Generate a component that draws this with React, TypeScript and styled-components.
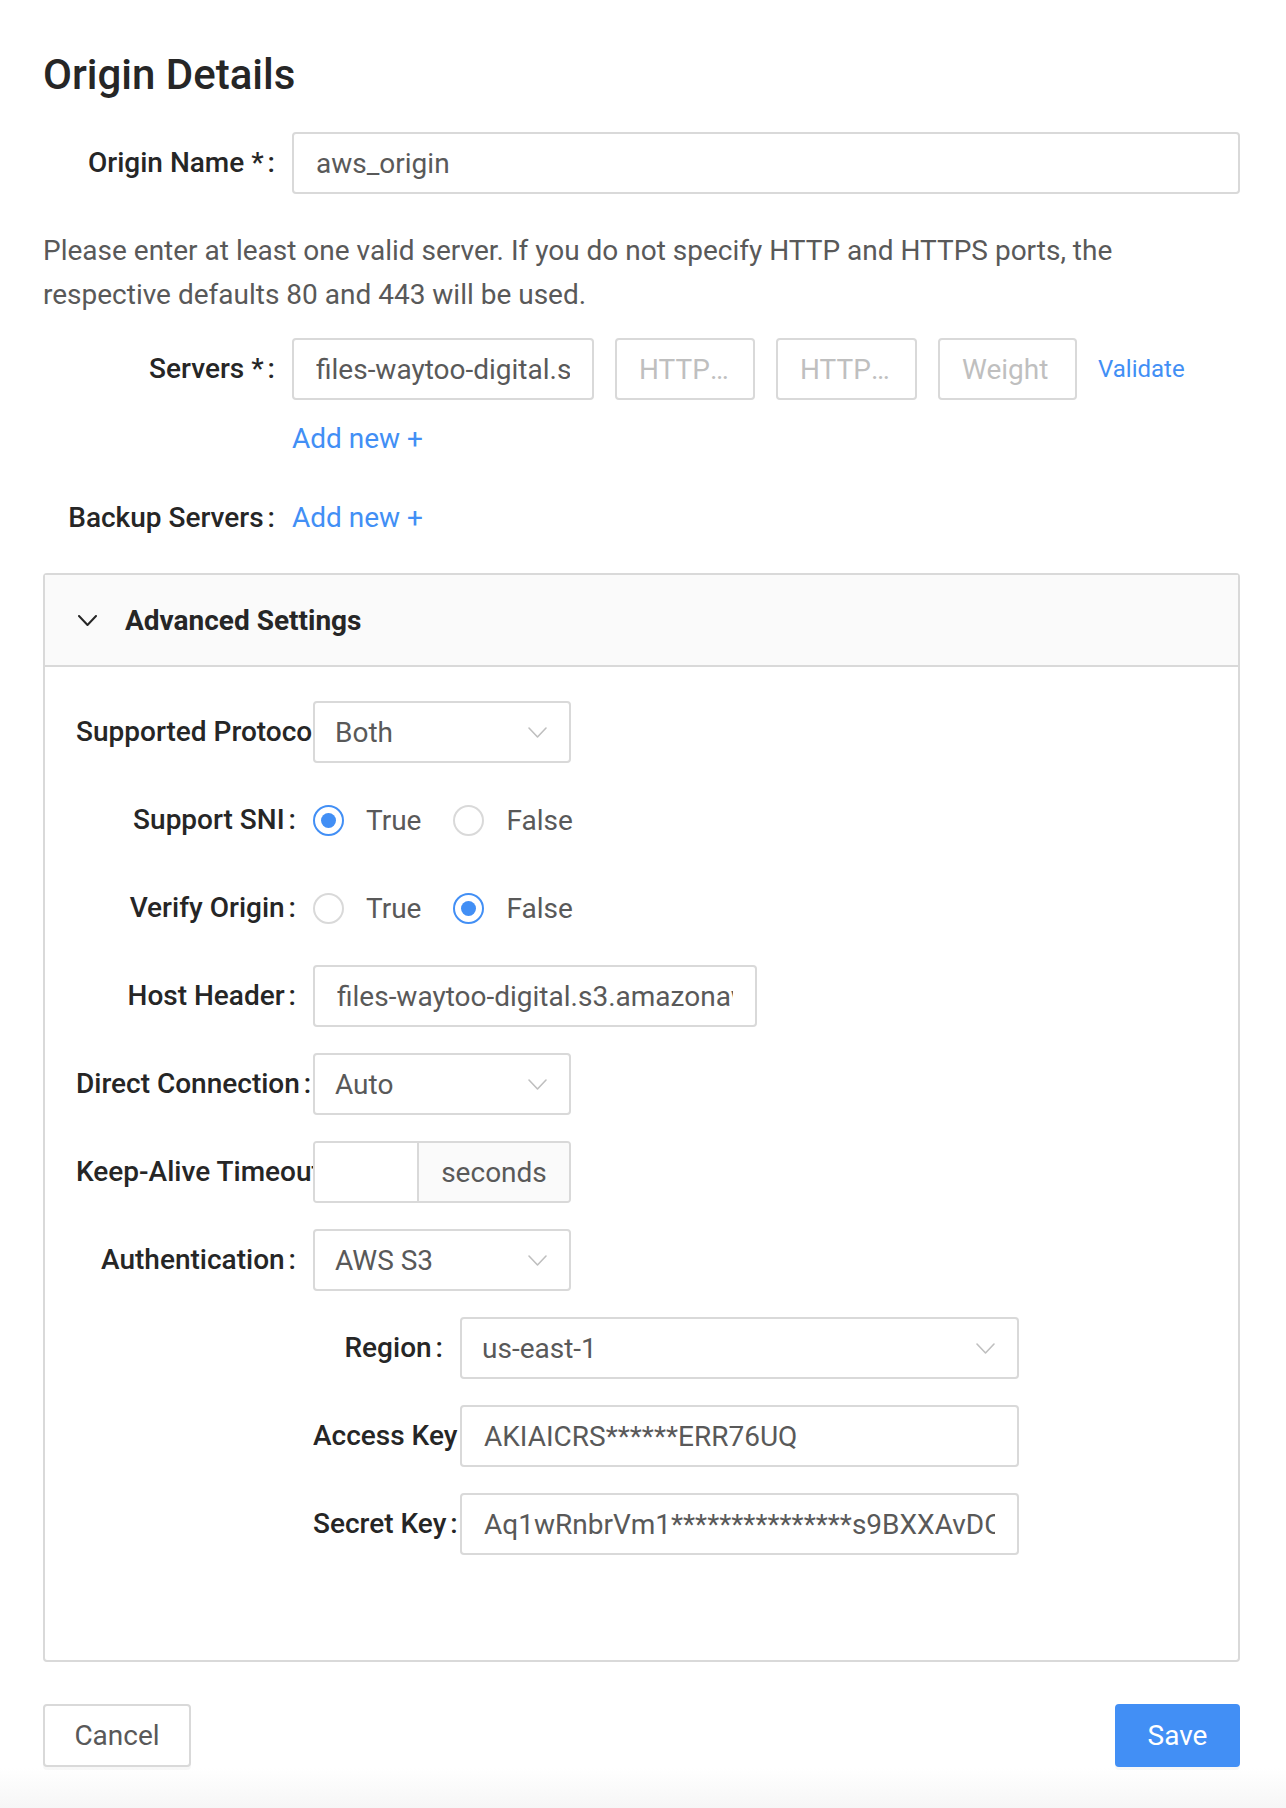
import React from 'react';
import styled, { createGlobalStyle } from 'styled-components';

const BLUE = '#428ff5';
const BORDER = '#d9d9d9';
const FS = 28;

const GlobalStyle = createGlobalStyle`
  html, body { margin: 0; padding: 0; background: #fff; }
  body {
    font-family: Roboto, "Liberation Sans", Arial, sans-serif;
    color: #262626;
    -webkit-font-smoothing: antialiased;
  }
  *, *::before, *::after { box-sizing: border-box; }
`;

const Page = styled.div`
  min-height: 1808px;
  padding: 51px 46px 0 43px;
  background: linear-gradient(to bottom, #fff 0, #fff 1768px, #f6f6f6 1808px);
`;

const Title = styled.h1`
  margin: 0 0 33px;
  font-size: 42px;
  line-height: 48px;
  font-weight: 500;
  color: #262626;
`;

const Row = styled.div<{ $mb?: number; $mt?: number }>`
  display: flex;
  align-items: center;
  min-height: 62px;
  margin-top: ${(p) => p.$mt ?? 0}px;
  margin-bottom: ${(p) => p.$mb ?? 0}px;
`;

const Label = styled.label<{ $width: number }>`
  flex: 0 0 ${(p) => p.$width}px;
  width: ${(p) => p.$width}px;
  overflow: hidden;
  white-space: nowrap;
  text-align: right;
  font-size: ${FS}px;
  line-height: 40px;
  font-weight: 500;
  color: #262626;
  &::after {
    content: ':';
    margin: 0 17px 0 4px;
  }
`;

const Controls = styled.div<{ $gap?: number }>`
  display: flex;
  align-items: center;
  gap: ${(p) => p.$gap ?? 0}px;
  flex: 1;
  min-width: 0;
`;

const TextInput = styled.input<{ $width?: number; $ellipsis?: boolean }>`
  height: 62px;
  width: ${(p) => (p.$width ? `${p.$width}px` : '100%')};
  flex: ${(p) => (p.$width ? `0 0 ${p.$width}px` : '1')};
  border: 2px solid ${BORDER};
  border-radius: 4px;
  padding: 0 22px;
  font-family: Roboto, "Liberation Sans", Arial, sans-serif;
  font-size: ${FS}px;
  color: #595959;
  background: #fff;
  outline: none;
  text-overflow: ${(p) => (p.$ellipsis ? 'ellipsis' : 'clip')};
  min-width: 0;
  &::placeholder {
    color: #bfbfbf;
  }
`;

const Paragraph = styled.p`
  margin: 35px 0 21px;
  font-size: 28px;
  line-height: 44px;
  color: #595959;
`;

const LinkText = styled.a<{ $size?: number }>`
  color: ${BLUE};
  font-size: ${(p) => p.$size ?? FS}px;
  line-height: 40px;
  text-decoration: none;
  cursor: pointer;
  white-space: nowrap;
`;

const AddRow = styled.div<{ $offset: number; $mt: number }>`
  padding-left: ${(p) => p.$offset}px;
  margin-top: ${(p) => p.$mt}px;
  line-height: 40px;
`;

const Panel = styled.section`
  margin-top: 24px;
  border: 2px solid ${BORDER};
  border-radius: 4px;
`;

const PanelHeader = styled.div`
  height: 92px;
  background: #fafafa;
  border-bottom: 2px solid ${BORDER};
  display: flex;
  align-items: center;
  gap: 28px;
  padding-left: 33px;
  font-size: ${FS}px;
  font-weight: 700;
  color: #262626;
`;

const PanelBody = styled.div`
  padding: 34px 31px 79px 31px;
`;

const FieldRow = styled.div`
  display: flex;
  align-items: center;
  height: 62px;
  margin-bottom: 26px;
`;

const SelectBox = styled.div<{ $width: number }>`
  width: ${(p) => p.$width}px;
  height: 62px;
  border: 2px solid ${BORDER};
  border-radius: 4px;
  display: flex;
  align-items: center;
  justify-content: space-between;
  padding: 0 22px 0 20px;
  font-size: ${FS}px;
  color: #595959;
  background: #fff;
`;

const Addon = styled.div<{ $width: number }>`
  display: flex;
  width: ${(p) => p.$width}px;
  height: 62px;
  border: 2px solid ${BORDER};
  border-radius: 4px;
  overflow: hidden;
`;

const AddonInput = styled.input`
  width: 104px;
  flex: 0 0 104px;
  height: 100%;
  border: none;
  border-right: 2px solid ${BORDER};
  outline: none;
  padding: 0 20px;
  font-family: Roboto, "Liberation Sans", Arial, sans-serif;
  font-size: ${FS}px;
  color: #595959;
`;

const AddonText = styled.div`
  flex: 1;
  background: #fafafa;
  display: flex;
  align-items: center;
  justify-content: center;
  font-size: ${FS}px;
  color: #595959;
`;

const RadioGroup = styled.div`
  display: flex;
  align-items: center;
  gap: 32px;
`;

const RadioOption = styled.label`
  display: flex;
  align-items: center;
  gap: 22px;
  font-size: ${FS}px;
  color: #595959;
`;

const RadioCircle = styled.span<{ $checked: boolean }>`
  width: 31px;
  height: 31px;
  border-radius: 50%;
  border: 2px solid ${(p) => (p.$checked ? BLUE : BORDER)};
  background: #fff;
  display: flex;
  align-items: center;
  justify-content: center;
  &::after {
    content: '';
    width: 15px;
    height: 15px;
    border-radius: 50%;
    background: ${BLUE};
    display: ${(p) => (p.$checked ? 'block' : 'none')};
  }
`;

const SubForm = styled.div`
  margin-left: 237px;
`;

const Footer = styled.div`
  margin-top: 42px;
  display: flex;
  justify-content: space-between;
`;

const Button = styled.button<{ $primary?: boolean; $width: number }>`
  width: ${(p) => p.$width}px;
  height: 63px;
  border-radius: 4px;
  border: 2px solid ${(p) => (p.$primary ? BLUE : BORDER)};
  background: ${(p) => (p.$primary ? BLUE : '#fff')};
  color: ${(p) => (p.$primary ? '#fff' : '#595959')};
  font-family: Roboto, "Liberation Sans", Arial, sans-serif;
  font-size: ${FS}px;
  box-shadow: 0 3px 0 rgba(0, 0, 0, 0.03);
  cursor: pointer;
`;

const Chevron = ({ color, w = 18, h = 10, sw = 1.6 }: { color: string; w?: number; h?: number; sw?: number }) => (
  <svg width={w} height={h} viewBox={`0 0 ${w} ${h}`} fill="none">
    <polyline
      points={`1,1 ${w / 2},${h - 1} ${w - 1},1`}
      stroke={color}
      strokeWidth={sw}
      strokeLinecap="round"
      strokeLinejoin="round"
    />
  </svg>
);

const Select = ({ value, width }: { value: string; width: number }) => (
  <SelectBox $width={width}>
    <span>{value}</span>
    <Chevron color="#bfbfbf" w={19} h={11} sw={1.6} />
  </SelectBox>
);

const Radio = ({ checked, label }: { checked: boolean; label: string }) => (
  <RadioOption>
    <RadioCircle $checked={checked} />
    <span>{label}</span>
  </RadioOption>
);

const L1 = 249;
const L2 = 237;
const L3 = 147;

export default function App() {
  return (
    <>
      <GlobalStyle />
      <Page>
        <Title>Origin Details</Title>

        <Row>
          <Label $width={L1}>Origin Name *</Label>
          <Controls>
            <TextInput defaultValue="aws_origin" />
          </Controls>
        </Row>

        <Paragraph>
          Please enter at least one valid server. If you do not specify HTTP and HTTPS ports, the respective defaults
          80 and 443 will be used.
        </Paragraph>

        <Row>
          <Label $width={L1}>Servers *</Label>
          <Controls $gap={21}>
            <TextInput $width={302} defaultValue="files-waytoo-digital.s3.amazonaws.com" />
            <TextInput $width={140} $ellipsis placeholder="HTTP Port" />
            <TextInput $width={141} $ellipsis placeholder="HTTPS Port" />
            <TextInput $width={139} $ellipsis placeholder="Weight" />
            <LinkText $size={24}>Validate</LinkText>
          </Controls>
        </Row>

        <AddRow $offset={L1} $mt={19}>
          <LinkText>Add new +</LinkText>
        </AddRow>

        <Row $mt={24}>
          <Label $width={L1}>Backup Servers</Label>
          <Controls>
            <LinkText>Add new +</LinkText>
          </Controls>
        </Row>

        <Panel>
          <PanelHeader>
            <Chevron color="#262626" w={19} h={11} sw={2} />
            <span>Advanced Settings</span>
          </PanelHeader>
          <PanelBody>
            <FieldRow>
              <Label $width={L2}>Supported Protocols</Label>
              <Select value="Both" width={258} />
            </FieldRow>
            <FieldRow>
              <Label $width={L2}>Support SNI</Label>
              <RadioGroup>
                <Radio checked label="True" />
                <Radio checked={false} label="False" />
              </RadioGroup>
            </FieldRow>
            <FieldRow>
              <Label $width={L2}>Verify Origin</Label>
              <RadioGroup>
                <Radio checked={false} label="True" />
                <Radio checked label="False" />
              </RadioGroup>
            </FieldRow>
            <FieldRow>
              <Label $width={L2}>Host Header</Label>
              <TextInput $width={444} defaultValue="files-waytoo-digital.s3.amazonaws.com" />
            </FieldRow>
            <FieldRow>
              <Label $width={L2}>Direct Connection</Label>
              <Select value="Auto" width={258} />
            </FieldRow>
            <FieldRow>
              <Label $width={L2}>Keep-Alive Timeout</Label>
              <Addon $width={258}>
                <AddonInput />
                <AddonText>seconds</AddonText>
              </Addon>
            </FieldRow>
            <FieldRow>
              <Label $width={L2}>Authentication</Label>
              <Select value="AWS S3" width={258} />
            </FieldRow>
            <SubForm>
              <FieldRow>
                <Label $width={L3}>Region</Label>
                <Select value="us-east-1" width={559} />
              </FieldRow>
              <FieldRow>
                <Label $width={L3}>Access Key</Label>
                <TextInput $width={559} defaultValue="AKIAICRS******ERR76UQ" />
              </FieldRow>
              <FieldRow>
                <Label $width={L3}>Secret Key</Label>
                <TextInput $width={559} defaultValue="Aq1wRnbrVm1***************s9BXXAvDC4kQ" />
              </FieldRow>
            </SubForm>
          </PanelBody>
        </Panel>

        <Footer>
          <Button $width={148}>Cancel</Button>
          <Button $primary $width={125}>
            Save
          </Button>
        </Footer>
      </Page>
    </>
  );
}
